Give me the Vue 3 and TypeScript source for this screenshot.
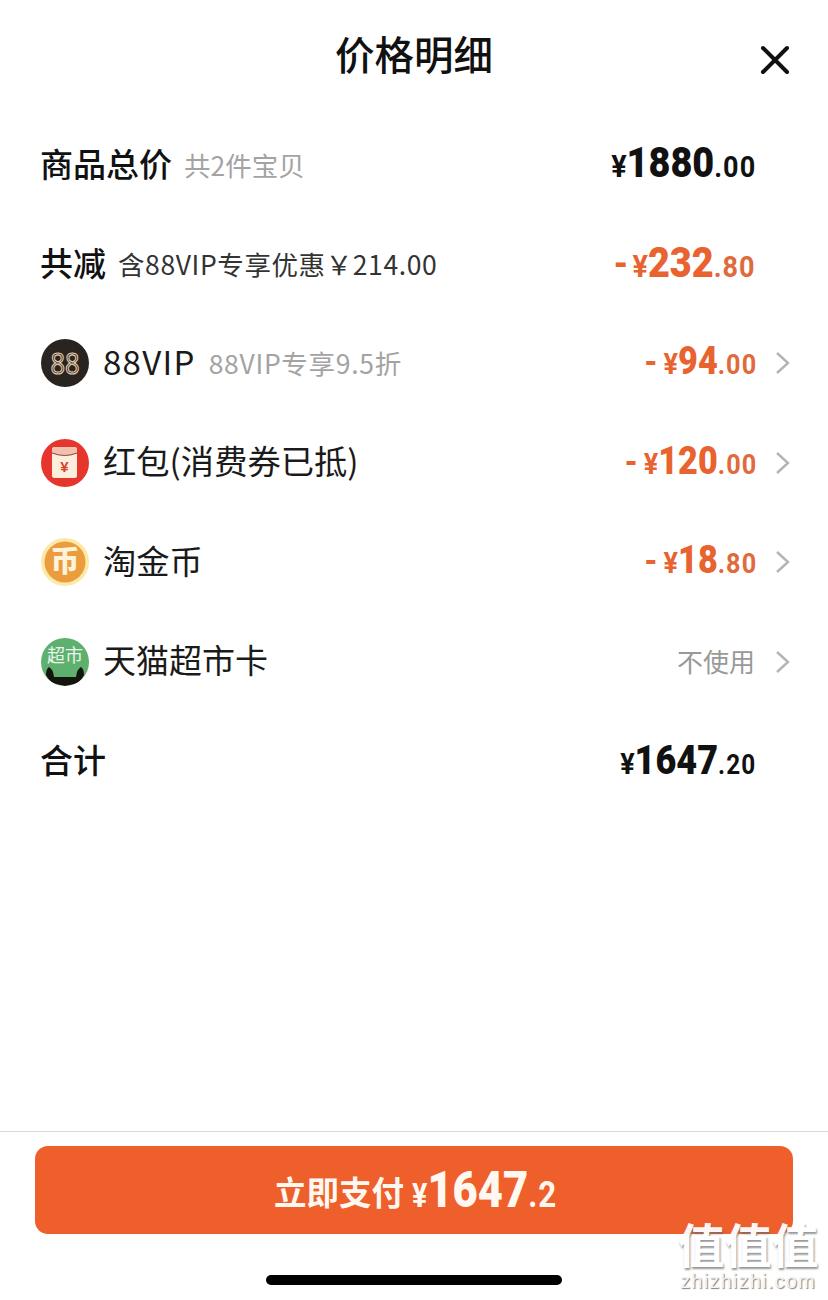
<template>
  <div class="page">
    <header class="head">
      <h1 class="title">价格明细</h1>
      <svg class="close" viewBox="0 0 30 30" width="30" height="30">
        <path d="M3 3 L27 27 M27 3 L3 27" stroke="#111" stroke-width="4" stroke-linecap="round" fill="none" />
      </svg>
    </header>

    <section class="list">
      <div class="row">
        <span class="label bold">商品总价</span>
        <span class="note">共2件宝贝</span>
        <span class="price big"><i class="yen">¥</i><b>1880</b><em>.00</em></span>
      </div>
      <div class="row">
        <span class="label bold">共减</span>
        <span class="note dark">含88VIP专享优惠￥214.00</span>
        <span class="price big red"><i class="minus">-</i><i class="yen">¥</i><b>232</b><em>.80</em></span>
      </div>

      <div v-for="item in items" :key="item.name" class="row">
        <svg v-if="item.icon === 'vip'" class="icon" viewBox="0 0 48 48">
          <circle cx="24" cy="24" r="24" fill="#2a2421" />
          <text transform="translate(24 34.5) scale(.85 1)" text-anchor="middle" class="vip-text">88</text>
        </svg>
        <svg v-else-if="item.icon === 'packet'" class="icon" viewBox="0 0 48 48">
          <circle cx="24" cy="24" r="24" fill="#e5352c" />
          <rect x="11" y="8" width="25" height="31" rx="2.5" fill="#fbeedd" />
          <path d="M11 10.5 Q11 8 13.5 8 H33.5 Q36 8 36 10.5 V14 Q24 19 11 14 Z" fill="#eec2ae" />
          <path d="M11 14 Q24 19 36 14" fill="none" stroke="#9c4038" stroke-width="1" />
          <text x="23.5" y="32.5" text-anchor="middle" class="packet-text">¥</text>
        </svg>
        <svg v-else-if="item.icon === 'coin'" class="icon" viewBox="0 0 48 48">
          <circle cx="24" cy="24" r="24" fill="#fbe9a8" />
          <circle cx="24" cy="24" r="20.5" fill="#eb9c3c" />
          <text x="24" y="33.5" text-anchor="middle" class="coin-text">币</text>
        </svg>
        <span v-else class="icon market">
          <span class="market-text">超市</span>
          <svg class="cat" viewBox="0 0 48 48">
            <path d="M5 37 Q5 31 8 29 Q12 31 13 39 H35 Q36 31 40 29 Q43 31 43 37 Q40 44 33 46 L24 48 L15 46 Q8 44 5 37 Z" fill="#15140f" />
          </svg>
        </span>
        <span class="label" :class="{ latin: item.icon === 'vip', tight: item.icon === 'market' }">{{ item.name }}</span>
        <span v-if="item.note" class="note mid">{{ item.note }}</span>
        <span v-if="item.text" class="unused">{{ item.text }}</span>
        <span v-else class="price small red"><i class="minus">-</i><i class="yen">¥</i><b>{{ item.whole }}</b><em>.{{ item.cents }}</em></span>
        <svg class="arrow" viewBox="0 0 16 24" width="16" height="24">
          <path d="M2 2 L13 12 L2 22" fill="none" stroke="#b4b4b4" stroke-width="2.4" />
        </svg>
      </div>

      <div class="row">
        <span class="label bold">合计</span>
        <span class="price total"><i class="yen">¥</i><b>1647</b><em>.20</em></span>
      </div>
    </section>

    <footer class="foot">
      <button class="pay">
        <span class="pay-label">立即支付</span>
        <span class="pay-price"><i class="pay-yen">¥</i><b class="pay-num">1647</b><em class="pay-cents">.2</em></span>
      </button>
      <div class="home-bar"></div>
    </footer>

    <div class="mark">
      <span class="mark-cn">值值值</span>
      <span class="mark-en">zhizhizhi.com</span>
    </div>
  </div>
</template>

<script setup lang="ts">
interface Item {
  name: string
  icon: string
  note?: string
  whole?: string
  cents?: string
  text?: string
}

const items: Item[] = [
  { name: '88VIP', icon: 'vip', note: '88VIP专享9.5折', whole: '94', cents: '00' },
  { name: '红包(消费券已抵)', icon: 'packet', whole: '120', cents: '00' },
  { name: '淘金币', icon: 'coin', whole: '18', cents: '80' },
  { name: '天猫超市卡', icon: 'market', text: '不使用' },
]
</script>

<style>
html,
body {
  background: #fff;
}
</style>

<style scoped>
.page {
  position: relative;
  width: 828px;
  height: 1300px;
  display: flex;
  flex-direction: column;
  background: #fff;
  overflow: hidden;
  font-family: "Noto Sans CJK SC", "Noto Sans", sans-serif;
  color: #111;
}

.head {
  position: relative;
  height: 115px;
  flex: none;
}

.title {
  margin: 0;
  padding-top: 28px;
  text-align: center;
  font-size: 39.5px;
  line-height: 50px;
  font-weight: 500;
}

.close {
  position: absolute;
  left: 760px;
  top: 45px;
}

.list {
  flex: 1;
  padding: 0 37px 0 40px;
}

.row {
  height: 99.4px;
  display: flex;
  align-items: center;
  position: relative;
}

.label {
  font-size: 33.3px;
  line-height: 40px;
  padding-bottom: 5px;
  color: #1a1a1a;
}

.label.latin {
  font-size: 33px;
  letter-spacing: 1.3px;
}

.label.tight {
  font-size: 33px;
}

.bold {
  font-weight: 500;
  font-size: 33px;
  padding-bottom: 4px;
  color: #111;
}

.note {
  margin-left: 12px;
  padding-bottom: 1px;
  font-size: 26.5px;
  color: #a3a3a3;
}

.note.dark {
  letter-spacing: 0.6px;
  color: #333;
}

.note.mid {
  margin-left: 13px;
  font-size: 26.5px;
  letter-spacing: 0.7px;
}

.icon {
  width: 48px;
  height: 48px;
  margin: 0 14px 0 1px;
  flex: none;
}

.vip-text {
  font-family: "Open Sans", sans-serif;
  font-size: 30px;
  fill: none;
  stroke: #e6cfae;
  stroke-width: 1.2;
}

.packet-text {
  font-family: "Liberation Sans", sans-serif;
  font-weight: 700;
  font-size: 15px;
  fill: #d8402f;
}

.coin-text {
  font-family: "Noto Sans CJK SC", sans-serif;
  font-weight: 900;
  font-size: 29px;
  fill: #fdf3dc;
}

.market {
  position: relative;
  display: block;
  border-radius: 50%;
  background: #5eb06e;
  overflow: hidden;
}

.market-text {
  position: absolute;
  left: 0;
  right: 0;
  top: 5px;
  text-align: center;
  font-size: 18px;
  line-height: 22px;
  color: #eaf6ea;
}

.cat {
  position: absolute;
  inset: 0;
}

.price {
  position: absolute;
  right: 35px;
  padding-bottom: 4px;
  font-family: Roboto, "Liberation Sans", sans-serif;
  display: flex;
  align-items: baseline;
  font-weight: 700;
  color: #111;
  transform: scaleX(0.9);
  transform-origin: right center;
}

.price i,
.price em,
.pay i,
.pay em {
  font-style: normal;
}

.price em {
  letter-spacing: 1.2px;
}

.big b {
  font-size: 42px;
}

.big .yen {
  font-size: 32px;
}

.big em {
  font-size: 30px;
}

.big .minus {
  font-size: 40px;
  margin-right: 5px;
}

.small b {
  font-size: 38px;
}

.small .yen {
  font-size: 30px;
}

.small em {
  font-size: 28px;
}

.small .minus {
  font-size: 36px;
  margin-right: 7px;
}

.price.total {
  padding-bottom: 2px;
}

.total b {
  font-size: 40px;
}

.total .yen {
  font-size: 30px;
}

.total em {
  font-size: 27px;
}

.red {
  color: #e8632f;
}

.red em {
  color: #df6a3c;
}

.row .red.small {
  right: 34px;
}

.row .total {
  right: 35px;
}

.unused {
  position: absolute;
  right: 36px;
  padding-bottom: 3px;
  font-size: 26px;
  color: #999;
}

.arrow {
  position: absolute;
  right: 0;
}

.foot {
  flex: none;
  height: 169px;
  border-top: 1px solid #d8d8d8;
  padding: 14px 35px 0;
  box-sizing: border-box;
}

.pay {
  width: 758px;
  height: 88px;
  border: none;
  border-radius: 13px;
  background: #ef5f2c;
  color: #fff8f0;
  display: flex;
  align-items: center;
  padding: 0 0 0 239px;
  box-sizing: border-box;
}

.pay-label {
  font-family: "Noto Sans CJK SC", sans-serif;
  font-weight: 700;
  font-size: 32.5px;
  margin-right: 8px;
}

.pay-price {
  display: flex;
  align-items: baseline;
  font-family: Roboto, "Liberation Sans", sans-serif;
  font-weight: 700;
  transform: scaleX(0.87);
  transform-origin: left center;
}

.pay-yen {
  font-size: 33px;
}

.pay-num {
  font-size: 50px;
}

.pay-cents {
  font-size: 36px;
  letter-spacing: 1px;
}

.home-bar {
  width: 296px;
  height: 10px;
  margin: 41px auto 0;
  border-radius: 5px;
  background: #000;
}

.mark {
  position: absolute;
  left: 672px;
  top: 1215px;
  width: 152px;
  display: flex;
  flex-direction: column;
  align-items: center;
  color: #fff;
  opacity: 0.95;
  text-shadow: 1px 2px 2px rgba(110, 110, 110, 0.75);
}

.mark-cn {
  font-size: 47px;
  line-height: 55px;
  font-weight: 700;
}

.mark-en {
  font-family: "Liberation Sans", sans-serif;
  font-size: 20px;
  line-height: 22px;
  letter-spacing: 1.2px;
  color: #f4f4f4;
  text-shadow: 1px 1px 1px rgba(90, 90, 90, 0.8);
}
</style>
